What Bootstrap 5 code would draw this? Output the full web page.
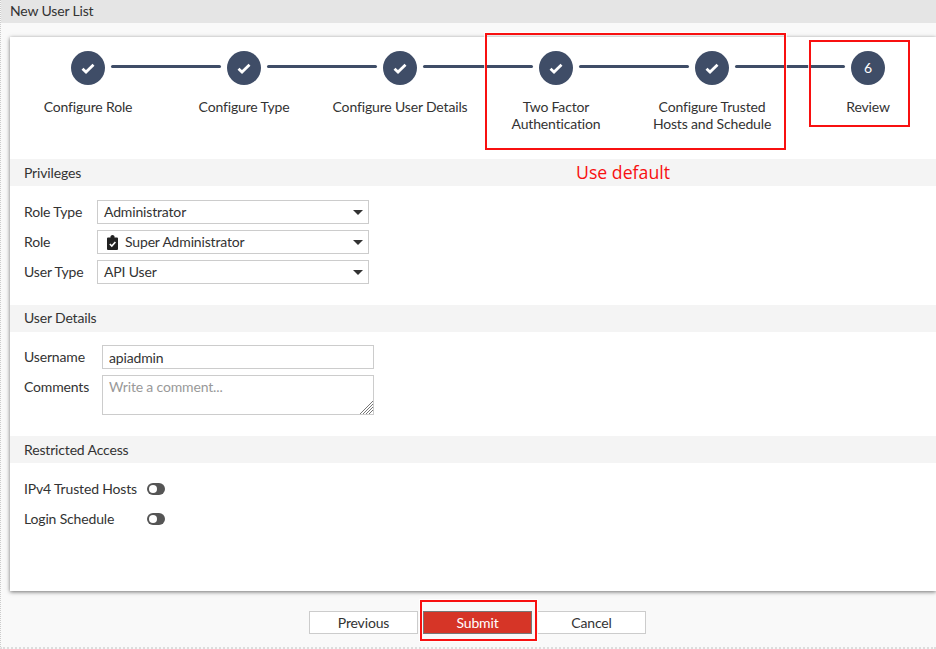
<!DOCTYPE html>
<html lang="en">
<head>
<meta charset="utf-8">
<title>New User List</title>
<link href="https://cdn.jsdelivr.net/npm/bootstrap@5.3.0/dist/css/bootstrap.min.css" rel="stylesheet">
<style>
html,body{height:649px;overflow:hidden}
body{background:#f9f9f9;font-family:Lato,"Liberation Sans",sans-serif;font-size:14px;color:#333;line-height:16px;letter-spacing:-.16px}
.page-wrap{position:relative;height:649px;overflow:hidden;border-left:1px dotted #ccc;border-bottom:2px dotted #ddd}
.title-bar{height:23px;background:#e5e5e5;padding:0 0 0 10px;margin-left:-1px;line-height:21px}
.main-panel{height:554px;margin:14px 0 0 9px;background:#fff;box-shadow:0 1px 4px rgba(0,0,0,.55)}
.stepper{height:122px;padding-top:14px}
.step{width:156px;flex:none;text-align:center}
.step-top{height:34px}
.step-line{flex:1 1 0;height:3.5px;margin-top:13.5px;background:#3f4d67}
.step-line.left{margin-right:6px;border-radius:0 2px 2px 0}
.step-line.right{margin-left:6px;border-radius:2px 0 0 2px}
.step-line.none{visibility:hidden}
.step-dot{width:34px;height:34px;border-radius:50%;background:#3f4d67;color:#fff;flex:none}
.step-label{margin-top:14px;white-space:nowrap;line-height:16.5px}
.sec-bar{height:27px;background:#f4f4f4;padding-left:14px;line-height:28px}
.sec-bar.raised{line-height:26px}
.sec-body{padding:14px 0 21px 14px}
.sec-body.tight{padding-top:13px}
.f-row{height:24px;margin-bottom:6px}
.f-row:last-child{margin-bottom:0}
.f-label{flex:none}
.lab-a{width:73px}
.lab-b{width:78px}
.lab-c{width:123px}
.fake-select.form-select{width:272px;height:24px;padding:0 0 0 6px;border:1px solid #ccc;border-radius:0;background-image:none;font-size:14px;line-height:22px;color:#333;position:relative}
.fake-select::after{content:"";position:absolute;right:5px;top:9px;border-left:5px solid transparent;border-right:5px solid transparent;border-top:5px solid #333}
.role-icon{margin-left:3px;margin-right:-1px}
.text-in.form-control{width:272px;height:24px;padding:0 6px;border:1px solid #ccc;border-radius:0;font-size:14px;color:#333;line-height:22px;letter-spacing:-.16px}
.area-wrap{position:relative;width:272px;height:40px}
.area-wrap .form-control{width:272px;height:40px;min-height:0;padding:3px 6px;border:1px solid #ccc;border-radius:0;font-size:14px;line-height:16px;resize:none;letter-spacing:-.16px}
.area-wrap .form-control::placeholder{color:#999}
.area-grip{position:absolute;right:1px;bottom:1px}
.toggle.form-check-input{width:18px;height:12px;margin:0 0 2px 0;border:0;border-radius:6px;background-color:#555;background-image:none;position:relative;float:none}
.toggle-wrap{position:relative;display:inline-block;width:18px;height:12px}
.toggle-knob{position:absolute;left:2px;top:2px;width:8px;height:8px;border-radius:50%;background:#fff;pointer-events:none}
.foot-bar{margin-top:20px;padding-left:308px;gap:5px}
.foot-btn.btn{width:109px;height:23px;padding:0;border:1px solid #ccc;border-radius:0;background:#fff;color:#333;font-size:14px;line-height:22px;letter-spacing:-.16px}
.foot-btn.submit.btn{background:#d63527;border-color:#777;color:#fff}
.mark-box{position:absolute;border:2px solid #f81010;box-shadow:0 0 0 1px rgba(255,255,255,.8);pointer-events:none}
.mark-a{left:484px;top:33px;width:301px;height:117px}
.mark-b{left:808px;top:40px;width:101px;height:87px}
.mark-c{left:419px;top:600px;width:117px;height:41px}
.mark-note{position:absolute;left:575px;top:160px;color:#f81010;font-family:"Open Sans",sans-serif;font-size:17.7px;line-height:24px;letter-spacing:0}
</style>
</head>
<body>
<div class="page-wrap">
  <div class="title-bar">New User List</div>
  <div class="main-panel">
    <div class="stepper d-flex">
      <div class="step">
        <div class="step-top d-flex"><div class="step-line left none"></div><div class="step-dot d-flex align-items-center justify-content-center"><svg width="16" height="13" viewBox="0 0 16 13"><path d="M2.5 6.8 6 10 13.5 2.8" fill="none" stroke="#fff" stroke-width="2.8"/></svg></div><div class="step-line right"></div></div>
        <div class="step-label">Configure Role</div>
      </div>
      <div class="step">
        <div class="step-top d-flex"><div class="step-line left"></div><div class="step-dot d-flex align-items-center justify-content-center"><svg width="16" height="13" viewBox="0 0 16 13"><path d="M2.5 6.8 6 10 13.5 2.8" fill="none" stroke="#fff" stroke-width="2.8"/></svg></div><div class="step-line right"></div></div>
        <div class="step-label">Configure Type</div>
      </div>
      <div class="step">
        <div class="step-top d-flex"><div class="step-line left"></div><div class="step-dot d-flex align-items-center justify-content-center"><svg width="16" height="13" viewBox="0 0 16 13"><path d="M2.5 6.8 6 10 13.5 2.8" fill="none" stroke="#fff" stroke-width="2.8"/></svg></div><div class="step-line right"></div></div>
        <div class="step-label">Configure User Details</div>
      </div>
      <div class="step">
        <div class="step-top d-flex"><div class="step-line left"></div><div class="step-dot d-flex align-items-center justify-content-center"><svg width="16" height="13" viewBox="0 0 16 13"><path d="M2.5 6.8 6 10 13.5 2.8" fill="none" stroke="#fff" stroke-width="2.8"/></svg></div><div class="step-line right"></div></div>
        <div class="step-label">Two Factor<br>Authentication</div>
      </div>
      <div class="step">
        <div class="step-top d-flex"><div class="step-line left"></div><div class="step-dot d-flex align-items-center justify-content-center"><svg width="16" height="13" viewBox="0 0 16 13"><path d="M2.5 6.8 6 10 13.5 2.8" fill="none" stroke="#fff" stroke-width="2.8"/></svg></div><div class="step-line right"></div></div>
        <div class="step-label">Configure Trusted<br>Hosts and Schedule</div>
      </div>
      <div class="step">
        <div class="step-top d-flex"><div class="step-line left"></div><div class="step-dot d-flex align-items-center justify-content-center">6</div><div class="step-line right none"></div></div>
        <div class="step-label">Review</div>
      </div>
    </div>

    <div class="sec-bar">Privileges</div>
    <div class="sec-body">
      <div class="f-row d-flex align-items-center"><div class="f-label lab-a">Role Type</div><div class="form-select fake-select">Administrator</div></div>
      <div class="f-row d-flex align-items-center"><div class="f-label lab-a">Role</div><div class="form-select fake-select d-flex align-items-center gap-2"><svg class="role-icon" width="11" height="15" viewBox="0 0 11 15"><path d="M1 2.5h2.5V1.6C3.5.8 4.5 0 5.5 0s2 .8 2 1.6v.9H10a1 1 0 0 1 1 1V14a1 1 0 0 1-1 1H1a1 1 0 0 1-1-1V3.5a1 1 0 0 1 1-1z" fill="#222"/><path d="M2.8 9 4.8 11 8.4 7" fill="none" stroke="#fff" stroke-width="1.6"/></svg><span>Super Administrator</span></div></div>
      <div class="f-row d-flex align-items-center"><div class="f-label lab-a">User Type</div><div class="form-select fake-select">API User</div></div>
    </div>

    <div class="sec-bar raised">User Details</div>
    <div class="sec-body tight">
      <div class="f-row d-flex align-items-center"><div class="f-label lab-b">Username</div><input class="form-control text-in" type="text" value="apiadmin"></div>
      <div class="d-flex"><div class="f-label lab-b pt-1">Comments</div><div class="area-wrap"><textarea class="form-control" placeholder="Write a comment..."></textarea><svg class="area-grip" width="14" height="14" viewBox="0 0 14 14"><path d="M1 14 14 1M4 14 14 4M7 14 14 7M10 14 14 10" stroke="#777" stroke-width="1"/></svg></div></div>
    </div>

    <div class="sec-bar">Restricted Access</div>
    <div class="sec-body">
      <div class="f-row d-flex align-items-center"><div class="f-label lab-c">IPv4 Trusted Hosts</div><span class="toggle-wrap"><input class="form-check-input toggle" type="checkbox" role="switch" aria-label="IPv4 Trusted Hosts"><span class="toggle-knob"></span></span></div>
      <div class="f-row d-flex align-items-center"><div class="f-label lab-c">Login Schedule</div><span class="toggle-wrap"><input class="form-check-input toggle" type="checkbox" role="switch" aria-label="Login Schedule"><span class="toggle-knob"></span></span></div>
    </div>
  </div>
  <div class="foot-bar d-flex">
    <button type="button" class="btn foot-btn">Previous</button>
    <button type="button" class="btn foot-btn submit">Submit</button>
    <button type="button" class="btn foot-btn">Cancel</button>
  </div>
  <div class="mark-box mark-a"></div>
  <div class="mark-box mark-b"></div>
  <div class="mark-box mark-c"></div>
  <div class="mark-note">Use default</div>
</div>
<script src="https://cdn.jsdelivr.net/npm/bootstrap@5.3.0/dist/js/bootstrap.bundle.min.js"></script>
</body>
</html>
